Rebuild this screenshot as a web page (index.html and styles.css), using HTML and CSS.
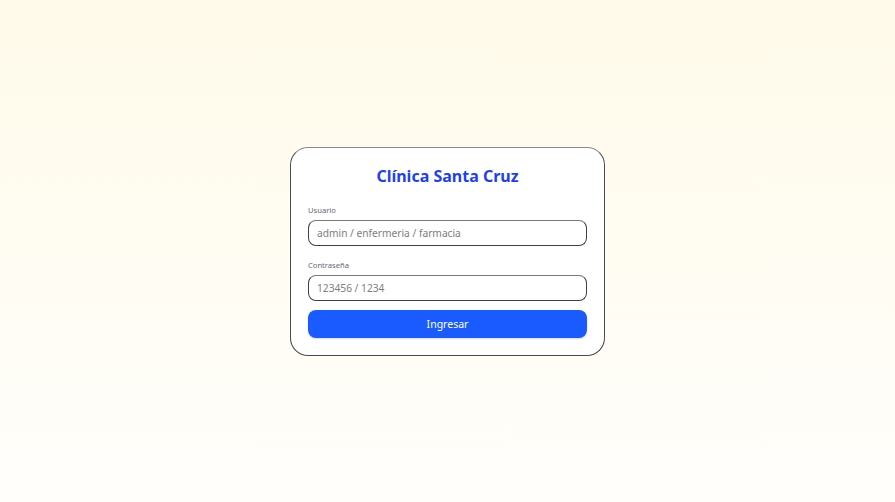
FILE: index.html
```html
<!DOCTYPE html>
<html lang="es">
<head>
<meta charset="utf-8">
<title>Clínica Santa Cruz</title>
<link rel="stylesheet" href="styles.css">
</head>
<body>
<main class="page">
  <form class="card">
    <h1 class="title">Clínica Santa Cruz</h1>
    <label class="label" for="u">Usuario</label>
    <input class="input" id="u" type="text" placeholder="admin / enfermeria / farmacia">
    <label class="label label-2" for="p">Contraseña</label>
    <input class="input" id="p" type="password" placeholder="123456 / 1234">
    <button class="btn" type="button">Ingresar</button>
  </form>
</main>
</body>
</html>
```
FILE: styles.css
```css
* { box-sizing: border-box; }
html, body { margin: 0; height: 100%; }
body {
  font-family: "Noto Sans", "Open Sans", "Liberation Sans", sans-serif;
  background: linear-gradient(180deg, #fffae9 0%, #fffcf2 50%, #fffefb 100%);
}
.page {
  height: 502px;
  display: flex;
  align-items: center;
  justify-content: center;
}
.card {
  width: 315px;
  height: 209px;
  margin-top: 1px;
  background: #fff;
  border: 1px solid #4a4a4a;
  border-top-color: #8a8a8a;
  border-radius: 18px;
  padding: 17px 17px 0 17px;
  display: flex;
  flex-direction: column;
}
.title {
  margin: 0 0 17px 0;
  font-size: 16px;
  line-height: 23px;
  font-weight: 700;
  color: #1d3ff2;
  text-align: center;
}
.label {
  font-size: 7.6px;
  line-height: 11px;
  color: #6a6478;
  margin-bottom: 4px;
}
.label-2 { margin-top: 14px; }
.input {
  width: 100%;
  height: 26px;
  border: 1px solid #3f3f3f;
  border-top-color: #777;
  border-radius: 8px;
  padding: 0 8px;
  font-family: inherit;
  font-size: 10.2px;
  color: #333;
  background: #fff;
  outline: none;
}
.input::placeholder { color: #7d7d7d; }
.btn {
  margin-top: 9px;
  height: 28px;
  width: 100%;
  border: none;
  border-radius: 8px;
  background: #195bff;
  color: #fff;
  font-family: inherit;
  font-size: 10.5px;
  box-shadow: 0 1px 2px rgba(0,0,0,0.15);
}
```
